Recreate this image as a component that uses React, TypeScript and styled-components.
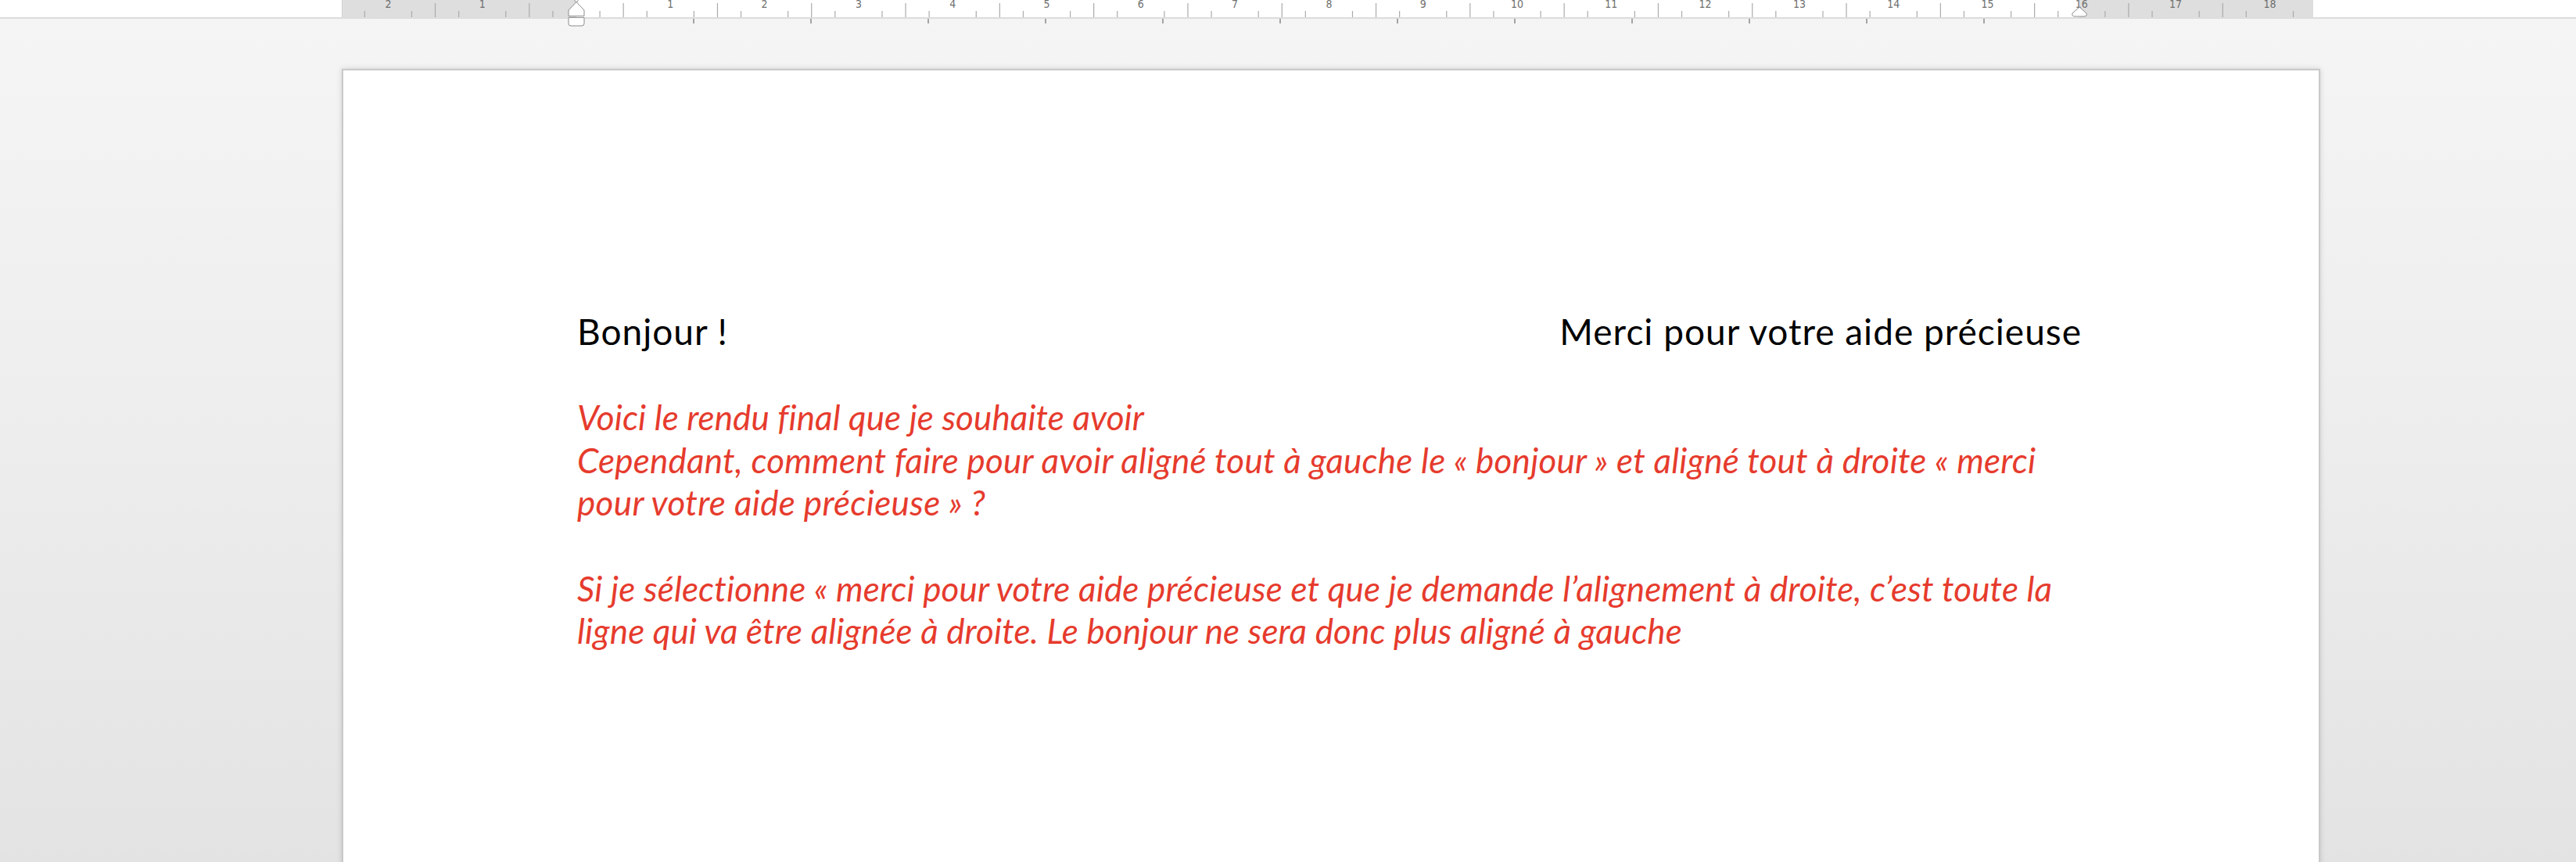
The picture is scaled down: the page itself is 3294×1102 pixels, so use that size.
import React from "react";
import styled, { createGlobalStyle } from "styled-components";

const GlobalStyle = createGlobalStyle`
  html, body {
    margin: 0;
    padding: 0;
    overflow: hidden;
  }
  body {
    background: #f3f3f3;
    font-family: "Lato", "Carlito", "Liberation Sans", sans-serif;
  }
`;

const Window = styled.div`
  width: 3294px;
  height: 1102px;
  overflow: hidden;
  display: flex;
  flex-direction: column;
  background: linear-gradient(to bottom, #f5f5f5 0%, #eeeeee 45%, #e3e3e3 100%);
`;

const RulerBar = styled.div`
  position: relative;
  z-index: 2;
  flex: 0 0 auto;
  height: 22px;
  background: #ffffff;
  border-bottom: 2px solid #dcdcdc;
  padding-left: 437px;
`;

const RulerSvg = styled.svg`
  display: block;
  overflow: visible;
`;

const Canvas = styled.div`
  flex: 1 1 auto;
  padding-top: 64px;
  padding-left: 437px;
`;

const Page = styled.div`
  width: 2530px;
  min-height: 1100px;
  background: #ffffff;
  border: 2px solid #c9c9c9;
  box-shadow: 0 0 7px rgba(0, 0, 0, 0.14);
  padding: 307px 303px 0 299px;
  box-sizing: border-box;
`;

const Line = styled.div<{ $spacing?: number }>`
  height: 54.6px;
  line-height: 54.6px;
  white-space: nowrap;
`;

const HeadRow = styled(Line)`
  display: flex;
  justify-content: space-between;
  color: #000000;
  font-size: 46px;
  letter-spacing: 1px;
`;

const RedLine = styled(Line)`
  color: #e63b2d;
  font-style: italic;
  font-size: 44px;
  letter-spacing: ${(p) => (p.$spacing ?? 0.2)}px;
`;

const Blank = styled.div`
  height: 54.6px;
`;

const CM = 120.3;
const ORIGIN = 300;
const RULER_W = 2521;
const RIGHT = 2222;

function Ruler() {
  const items: React.ReactNode[] = [];
  for (let k = -12; k <= 80; k++) {
    const x = ORIGIN + (k * CM) / 4;
    if (x < 2 || x > RULER_W - 2) continue;
    if (k === 0) continue;
    if (k % 4 === 0) {
      items.push(
        <text
          key={`n${k}`}
          x={x}
          y={10}
          textAnchor="middle"
          fontSize={14}
          fill="#6f6f6f"
          fontFamily="'DejaVu Sans Condensed', 'DejaVu Sans', sans-serif"
        >
          {Math.abs(k / 4)}
        </text>
      );
    } else if (Math.abs(k % 4) === 2) {
      items.push(<line key={`l${k}`} x1={x} x2={x} y1={4} y2={22} stroke="#ababab" strokeWidth={1.2} />);
    } else {
      items.push(<line key={`s${k}`} x1={x} x2={x} y1={14} y2={22} stroke="#ababab" strokeWidth={1.2} />);
    }
  }
  const tabs: React.ReactNode[] = [];
  for (let m = 1; m <= 12; m++) {
    const x = ORIGIN + m * 150;
    tabs.push(<line key={`t${m}`} x1={x} x2={x} y1={24} y2={30} stroke="#8a8a8a" strokeWidth={1.5} />);
  }
  return (
    <RulerSvg width={RULER_W} height={22} viewBox={`0 0 ${RULER_W} 22`}>
      <rect x={0} y={0} width={ORIGIN} height={22} fill="#dedede" />
      <rect x={RIGHT} y={0} width={RULER_W - RIGHT} height={22} fill="#dedede" />
      <line x1={0.5} x2={0.5} y1={0} y2={22} stroke="#d0d0d0" />
      {items}
      {tabs}
      <circle cx={ORIGIN} cy={0.5} r={2} fill="#ffffff" stroke="#8c8c8c" strokeWidth={1} />
      <path
        d={`M ${ORIGIN} 2.5 L ${ORIGIN + 10} 13 L ${ORIGIN + 10} 20.5 L ${ORIGIN - 10} 20.5 L ${ORIGIN - 10} 13 Z`}
        fill="#ffffff"
        stroke="#8c8c8c"
        strokeWidth={1}
      />
      <path
        d={`M ${ORIGIN - 10} 22.5 L ${ORIGIN + 10} 22.5 L ${ORIGIN + 10} 30 Q ${ORIGIN + 10} 33 ${ORIGIN + 7} 33 L ${ORIGIN - 7} 33 Q ${ORIGIN - 10} 33 ${ORIGIN - 10} 30 Z`}
        fill="#ffffff"
        stroke="#8c8c8c"
        strokeWidth={1}
      />
      <path
        d={`M ${RIGHT} 9 L ${RIGHT + 9} 17 Q ${RIGHT + 10} 21 ${RIGHT + 6} 21 L ${RIGHT - 6} 21 Q ${RIGHT - 10} 21 ${RIGHT - 9} 17 Z`}
        fill="#ffffff"
        stroke="#8c8c8c"
        strokeWidth={1}
      />
    </RulerSvg>
  );
}

export default function App() {
  return (
    <>
      <GlobalStyle />
      <Window>
        <RulerBar>
          <Ruler />
        </RulerBar>
        <Canvas>
          <Page>
            <HeadRow>
              <span>Bonjour !</span>
              <span>Merci pour votre aide précieuse</span>
            </HeadRow>
            <Blank />
            <RedLine $spacing={0.1}>Voici le rendu final que je souhaite avoir</RedLine>
            <RedLine $spacing={0.22}>
              Cependant, comment faire pour avoir aligné tout à gauche le « bonjour » et aligné tout à droite « merci
            </RedLine>
            <RedLine $spacing={0.35}>pour votre aide précieuse » ?</RedLine>
            <Blank />
            <RedLine $spacing={0.16}>
              Si je sélectionne « merci pour votre aide précieuse et que je demande l’alignement à droite, c’est toute la
            </RedLine>
            <RedLine $spacing={0.13}>ligne qui va être alignée à droite. Le bonjour ne sera donc plus aligné à gauche</RedLine>
          </Page>
        </Canvas>
      </Window>
    </>
  );
}
